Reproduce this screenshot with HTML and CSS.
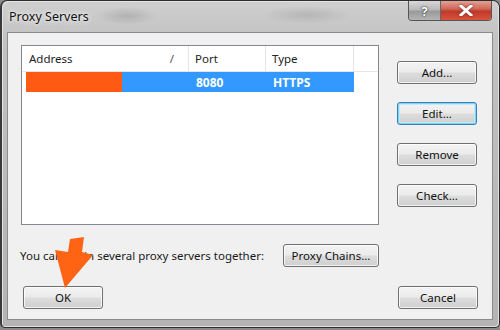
FILE: index.html
```html
<!DOCTYPE html>
<html lang="en">
<head>
    <meta charset="UTF-8">
    <meta name="viewport" content="width=device-width, initial-scale=1.0">
    <title>Proxy Servers</title>
    <link rel="stylesheet" href="styles.css">
</head>
<body>
    <div class="window">
        <div class="titlebar">
            <span class="title">Proxy Servers</span>
            <div class="caption-buttons">
                <div class="cap-btn help">?</div>
                <div class="cap-btn close">
                    <svg width="14" height="11" viewBox="0 0 14 11">
                        <path d="M2 1 L12 10 M12 1 L2 10" stroke="#fff" stroke-width="3" stroke-linecap="square"/>
                    </svg>
                </div>
            </div>
        </div>
        <div class="client">
            <div class="top-row">
                <div class="listbox">
                    <div class="list-header">
                        <div class="col col-address">Address<span class="sort">/</span></div>
                        <div class="col col-port">Port</div>
                        <div class="col col-type">Type</div>
                    </div>
                    <div class="list-row selected">
                        <div class="cell cell-address"><span class="redact"></span></div>
                        <div class="cell cell-port">8080</div>
                        <div class="cell cell-type">HTTPS</div>
                    </div>
                </div>
                <div class="side-buttons">
                    <button class="btn">Add...</button>
                    <button class="btn focused">Edit...</button>
                    <button class="btn">Remove</button>
                    <button class="btn">Check...</button>
                </div>
            </div>
            <div class="chain-row">
                <span class="chain-text">You can chain several proxy servers together:</span>
                <button class="btn btn-chains">Proxy Chains...</button>
            </div>
            <div class="bottom-row">
                <button class="btn">OK</button>
                <button class="btn">Cancel</button>
            </div>
        </div>
        <!-- orange pointer drawn over the dialog -->
        <svg class="arrow" width="60" height="70" viewBox="0 0 60 70">
            <polygon points="23,9 37,7 35,22 46,25 18,58 8,20 21,22" fill="#ff6414"/>
        </svg>
    </div>
</body>
</html>
```

FILE: styles.css
```css
body {
    margin: 0;
    padding: 0;
    background: #8a8a8a;
    font-family: "Noto Sans", "Open Sans", sans-serif;
    font-size: 11.5px;
    color: #1a1a1a;
}

.window {
    position: relative;
    width: 500px;
    height: 328px;
    box-sizing: border-box;
    border: 1px solid #2e2e2e;
    border-left: 2px solid #3a3a3a;
    border-radius: 7px 7px 5px 5px;
    padding: 0 6px 0 5px;
    background:
        radial-gradient(ellipse 30px 9px at 125px 15px, rgba(90, 90, 90, 0.22), transparent),
        radial-gradient(ellipse 45px 9px at 305px 14px, rgba(90, 90, 90, 0.18), transparent),
        linear-gradient(#cfcfcf, #c2c2c2 40px, #b9b9b9 200px, #b4b4b4);
    box-shadow: inset 1px 1px 0 #e4e4e4, inset -1px -1px 0 #e0e0e0;
}

.titlebar {
    height: 31px;
    display: flex;
    align-items: flex-start;
    justify-content: space-between;
}

.title {
    margin: 7px 0 0 2px;
    font-size: 12.5px;
    color: #111;
    text-shadow: 0 0 6px #f4f4f4, 0 0 3px #f4f4f4;
}

.caption-buttons {
    display: flex;
    margin-right: 1px;
    border: 1px solid #555;
    border-top: none;
    border-radius: 0 0 4px 4px;
    overflow: hidden;
    height: 19px;
}

.cap-btn {
    height: 19px;
    display: flex;
    align-items: center;
    justify-content: center;
}

.help {
    width: 31px;
    border-right: 1px solid #666;
    background: linear-gradient(#d8d8d8, #b8b8b8 45%, #9a9a9a 55%, #b4b4b4);
    color: #fff;
    font-weight: bold;
    font-size: 13px;
    text-shadow: 0 0 2px #333, 0 0 1px #222;
}

.close {
    width: 50px;
    background: linear-gradient(#e2a196, #cf6b5a 40%, #c0392b 55%, #d9533c);
}

.close svg {
    filter: drop-shadow(0 0 1px #7a1a10);
}

.client {
    height: 288px;
    box-sizing: border-box;
    border: 1px solid #8c8c8c;
    background: #f0f0f0;
    padding-top: 12px;
}

.top-row {
    display: flex;
    padding-left: 13px;
    gap: 18px;
}

.listbox {
    width: 358px;
    height: 180px;
    box-sizing: border-box;
    border: 1px solid #828790;
    background: #fff;
}

.list-header {
    display: flex;
    height: 26px;
    box-sizing: border-box;
    border-bottom: 1px solid #e5e5e5;
}

.col {
    display: flex;
    align-items: center;
    padding-left: 6px;
    box-sizing: border-box;
    border-right: 1px solid #e5e5e5;
    color: #222;
}

.col-address {
    width: 167px;
    padding-left: 7px;
}

.sort {
    margin-left: auto;
    margin-right: 14px;
    color: #555;
}

.col-port {
    width: 77px;
}

.col-type {
    width: 88px;
}

.list-row {
    display: flex;
    height: 20px;
    margin-left: 4px;
    width: 328px;
}

.selected {
    background: #3399ff;
    color: #fff;
}

.cell {
    display: flex;
    align-items: center;
    box-sizing: border-box;
    padding-left: 7px;
    font-weight: bold;
    font-size: 12px;
}

.cell-address {
    width: 163px;
    padding-left: 0;
    align-items: stretch;
}

.redact {
    width: 96px;
    background: #ff5a14;
    border-radius: 1px;
}

.cell-port {
    width: 77px;
}

.cell-type {
    width: 88px;
}

.side-buttons {
    display: flex;
    flex-direction: column;
    gap: 18px;
    padding-top: 16px;
}

.btn {
    width: 80px;
    height: 23px;
    padding: 0;
    border: 1px solid #707070;
    border-radius: 3px;
    background: linear-gradient(#f3f3f3, #ebebeb 48%, #dddddd 52%, #cfcfcf);
    box-shadow: inset 0 0 0 1px rgba(255, 255, 255, 0.75);
    font-family: "Noto Sans", "Open Sans", sans-serif;
    font-size: 11.5px;
    color: #111;
}

.btn.focused {
    border-color: #3c7fb1;
    box-shadow: inset 0 0 0 1px #7fd2f5, inset 0 0 0 2px rgba(190, 234, 252, 0.9);
}

.chain-row {
    display: flex;
    align-items: center;
    justify-content: space-between;
    width: 359px;
    margin: 19px 0 0 12px;
}

.btn-chains {
    width: 96px;
}

.bottom-row {
    display: flex;
    justify-content: space-between;
    padding: 0 14px 0 15px;
    margin-top: 19px;
}

.arrow {
    position: absolute;
    left: 45px;
    top: 229px;
}
```
